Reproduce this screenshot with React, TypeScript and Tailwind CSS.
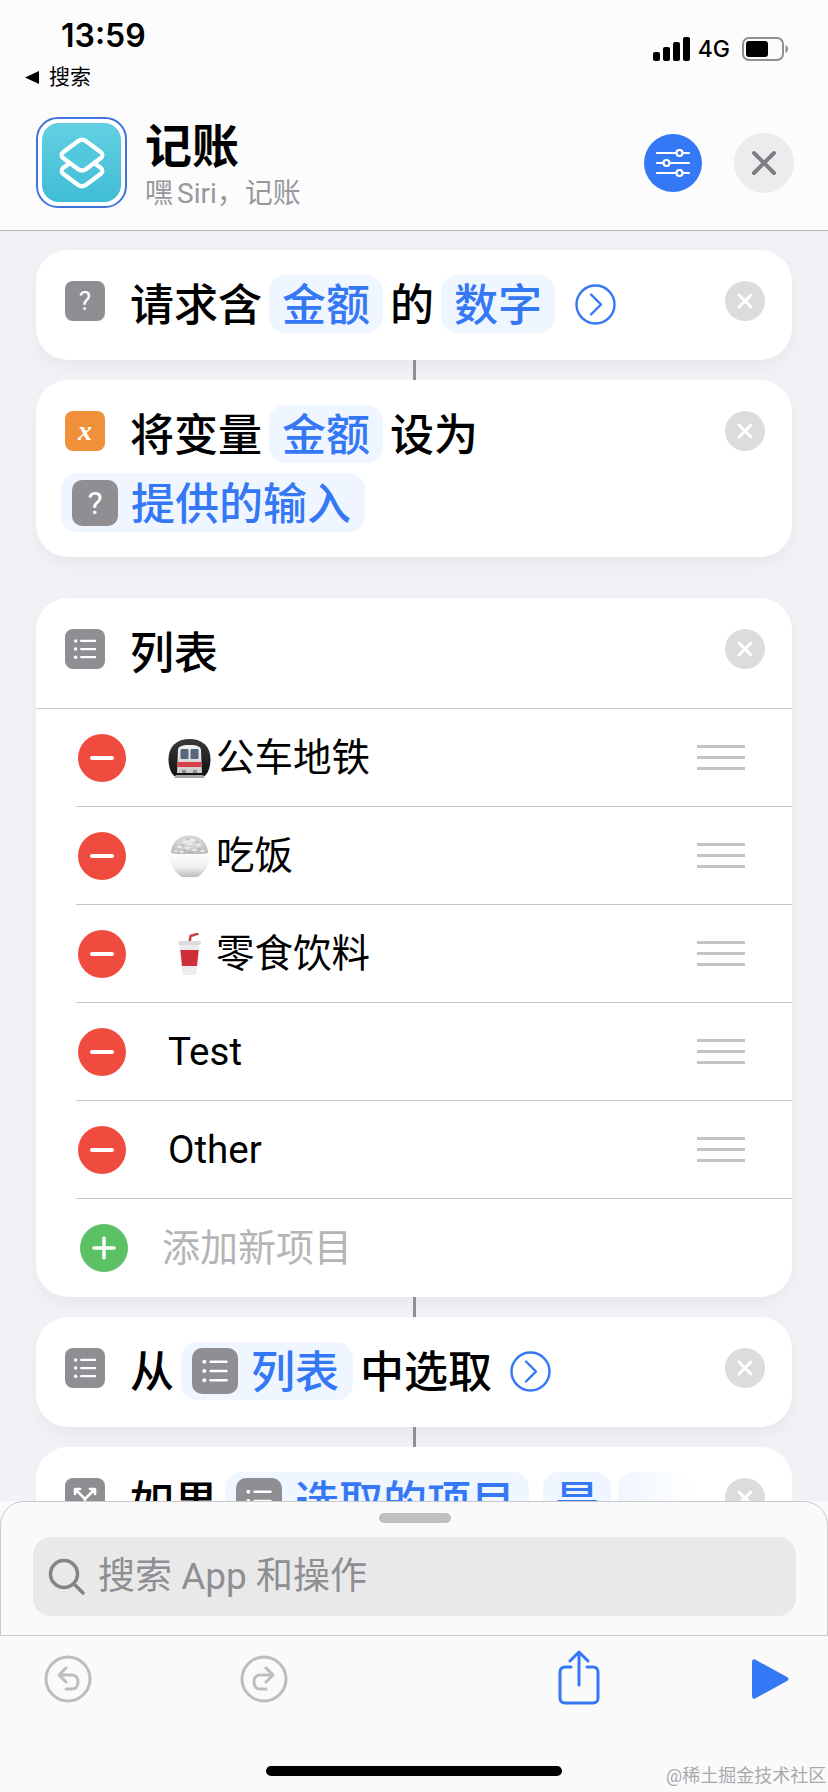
import React from 'react';

const FONT = "font-['Roboto','Noto_Sans_CJK_SC',sans-serif]";

function CloseDot() {
  return (
    <div className="flex h-10 w-10 shrink-0 items-center justify-center rounded-full bg-[#dcdcde]">
      <svg width="18" height="18" viewBox="0 0 18 18" fill="none" stroke="white" strokeWidth="3" strokeLinecap="round">
        <path d="M3 3l12 12M15 3L3 15" />
      </svg>
    </div>
  );
}

function ListGlyph({ size }: { size: number }) {
  return (
    <svg width={size} height={size} viewBox="0 0 24 24" fill="white">
      <circle cx="4.5" cy="5.5" r="1.4" />
      <circle cx="4.5" cy="12" r="1.4" />
      <circle cx="4.5" cy="18.5" r="1.4" />
      <rect x="8" y="4.6" width="13" height="1.8" rx="0.9" />
      <rect x="8" y="11.1" width="13" height="1.8" rx="0.9" />
      <rect x="8" y="17.6" width="13" height="1.8" rx="0.9" />
    </svg>
  );
}

function ActionIcon({ children, color = 'bg-[#8e8e93]' }: { children: React.ReactNode; color?: string }) {
  return (
    <div className={`flex h-10 w-10 shrink-0 items-center justify-center rounded-lg ${color}`}>{children}</div>
  );
}

function QuestionMark({ big }: { big?: boolean }) {
  return (
    <span className={`font-normal text-white ${big ? 'text-[32px]' : 'text-[26px]'} leading-none`}>?</span>
  );
}

function Label({ children }: { children: React.ReactNode }) {
  return <span className="mt-1 shrink-0 leading-none">{children}</span>;
}

function Chip({ children, className = '' }: { children?: React.ReactNode; className?: string }) {
  return (
    <span className={`flex h-[58px] shrink-0 items-center rounded-[16px] bg-[#f0f6ff] text-[#3478f6] ${className}`}>
      {children}
    </span>
  );
}

function InnerIcon({ children }: { children: React.ReactNode }) {
  return (
    <span className="flex h-[46px] w-[46px] items-center justify-center rounded-[10px] bg-[#8e8e93]">{children}</span>
  );
}

function Chevron() {
  return (
    <svg width="41" height="41" viewBox="0 0 41 41" fill="none" stroke="#3478f6" strokeWidth="2.4" className="shrink-0">
      <circle cx="20.5" cy="20.5" r="19" />
      <path d="M16 10.5l10 10-10 10" strokeLinecap="round" strokeLinejoin="round" />
    </svg>
  );
}

function Row({ icon, children }: { icon: React.ReactNode; children: React.ReactNode }) {
  return (
    <div className="flex h-[58px] items-start">
      <div className="mt-[6px]">{icon}</div>
      <div className="ml-[25px] flex h-[58px] min-w-0 flex-1 items-center gap-[7px] overflow-hidden">{children}</div>
      <div className="mt-[6px] ml-2">
        <CloseDot />
      </div>
    </div>
  );
}

function Connector() {
  return (
    <div className="flex h-5 justify-center">
      <div className="w-[3px] bg-[#8e8e93]" />
    </div>
  );
}

function MetroEmoji() {
  return (
    <svg width="43" height="42" viewBox="0 0 43 42">
      <defs>
        <linearGradient id="tunnel" x1="0" y1="0" x2="0" y2="1">
          <stop offset="0" stopColor="#3a3a3c" />
          <stop offset="1" stopColor="#111113" />
        </linearGradient>
        <linearGradient id="train" x1="0" y1="0" x2="0" y2="1">
          <stop offset="0" stopColor="#f4f4f4" />
          <stop offset="1" stopColor="#c9c9cb" />
        </linearGradient>
      </defs>
      <path d="M0.500 22C0.500 9 9 2 21.500 2S42.500 9 42.500 22c0 9-3 15-6 17H6.500c-3-2-6-8-6-17z" fill="url(#tunnel)" />
      <path d="M8 38h27l2 3H6z" fill="#a5a5a8" />
      <path d="M10 13c0-3 3-5 11.500-5S33 10 33 13l1 23H9z" fill="url(#train)" />
      <rect x="12.500" y="12" width="8" height="10" rx="1" fill="#56687a" />
      <rect x="22.500" y="12" width="8" height="10" rx="1" fill="#56687a" />
      <rect x="9.500" y="25" width="24" height="5" fill="#d8414a" />
      <rect x="14" y="33" width="4" height="3" fill="#8b8b8d" />
      <rect x="25" y="33" width="4" height="3" fill="#8b8b8d" />
    </svg>
  );
}

function RiceEmoji() {
  return (
    <svg width="43" height="42" viewBox="0 0 43 42">
      <defs>
        <radialGradient id="rice" cx="0.5" cy="0.35" r="0.7">
          <stop offset="0" stopColor="#e6e6e6" />
          <stop offset="1" stopColor="#b9b9b9" />
        </radialGradient>
        <linearGradient id="bowl" x1="0" y1="0" x2="0" y2="1">
          <stop offset="0" stopColor="#ffffff" />
          <stop offset="0.6" stopColor="#f0f0f0" />
          <stop offset="1" stopColor="#bcbcbc" />
        </linearGradient>
      </defs>
      <path d="M3 19C3 8 10 0.500 21.500 0.500S40 8 40 19z" fill="url(#rice)" />
      <path
        d="M10 12h3M16 7h3M23 5h3M29 10h3M18 13h3M25 15h3M12 17h3M33 16h3M21 9h2M7 16h2"
        stroke="#f7f7f7"
        strokeWidth="1.500"
        strokeLinecap="round"
      />
      <path
        d="M14 10h2M21 17h2M28 7h2M16 16h2M30 14h2M19 4h2"
        stroke="#a6a6a6"
        strokeWidth="1.200"
        strokeLinecap="round"
      />
      <path d="M0.500 17c2 3 40 3 42 0 0 12-6 21-13 25H14C7 38 0.500 29 0.500 17z" fill="url(#bowl)" />
    </svg>
  );
}

function DrinkEmoji() {
  return (
    <svg width="43" height="42" viewBox="0 0 43 42">
      <path d="M21.500 10l1-7 8-2.500" fill="none" stroke="#c9404a" strokeWidth="2.500" />
      <rect x="10" y="8" width="23" height="4" rx="2" fill="#dcdcde" />
      <path d="M11.500 12h20l-3 28c0 1-1 2-2 2H16.500c-1 0-2-1-2-2z" fill="#ececee" />
      <path d="M12.300 17h18.400l-1.700 16H14z" fill="#cf2f38" />
    </svg>
  );
}

function DeleteDot() {
  return (
    <div className="ml-[2px] flex h-12 w-12 shrink-0 items-center justify-center rounded-full bg-[#ef4c3f]">
      <div className="h-1 w-6 rounded-full bg-white" />
    </div>
  );
}

function ListRow({ emoji, label }: { emoji?: React.ReactNode; label: string }) {
  return (
    <div className="ml-10 flex h-[98px] items-center border-b border-[#c6c6c8] pr-[47px]">
      <DeleteDot />
      <div className="ml-[42px] flex flex-1 items-center gap-[5px] text-[38.5px] font-normal text-black">
        {emoji}
        <span>{label}</span>
      </div>
      <div className="flex w-12 flex-col gap-[8px]">
        <div className="h-[3px] bg-[#c4c4c6]" />
        <div className="h-[3px] bg-[#c4c4c6]" />
        <div className="h-[3px] bg-[#c4c4c6]" />
      </div>
    </div>
  );
}

export default function App() {
  return (
    <div className={`relative flex h-[1792px] w-[828px] flex-col overflow-hidden bg-[#f2f2f6] ${FONT}`}>
      {/* Header */}
      <header className="h-[231px] shrink-0 border-b border-[#b8b8bc] bg-[#fcfcfd]">
        <div className="flex h-[117px] items-start justify-between">
          <div className="pt-[17px]">
            <div className="pl-[61px] font-['Inter',sans-serif] text-[32px] leading-[38px] font-semibold text-black">13:59</div>
            <div className="mt-[10px] flex items-center pl-[25px] text-[21px] leading-6 text-black">
              <svg width="15" height="13" viewBox="0 0 15 13" fill="black">
                <path d="M0 6.500L14 0v13z" />
              </svg>
              <span className="ml-[9px]">搜索</span>
            </div>
          </div>
          <div className="flex items-center pt-[37px] pr-10">
            <svg width="37" height="24" viewBox="0 0 37 24" fill="black">
              <rect x="0" y="15" width="7" height="9" rx="2" />
              <rect x="10" y="10" width="7" height="14" rx="2" />
              <rect x="20" y="5" width="7" height="19" rx="2" />
              <rect x="30" y="0" width="7" height="24" rx="2" />
            </svg>
            <span className="ml-2 font-['Inter',sans-serif] text-[23px] leading-6 font-medium text-black">4G</span>
            <svg width="46" height="24" viewBox="0 0 46 24" className="ml-[12px]">
              <rect x="1" y="1" width="40" height="22" rx="6" fill="none" stroke="#8f8f93" strokeWidth="2" />
              <rect x="4" y="4" width="22" height="16" rx="3" fill="black" />
              <path d="M43.500 8c1.500.5 2.500 2 2.500 4s-1 3.500-2.500 4z" fill="#8f8f93" />
            </svg>
          </div>
        </div>
        <div className="flex h-[91px] items-center pr-[34px] pl-9">
          <div className="h-[91px] w-[91px] shrink-0 rounded-[22px] border-2 border-[#3f74dc] bg-white p-1">
            <div className="flex h-full w-full items-center justify-center rounded-[17px] bg-gradient-to-b from-[#62d0e2] to-[#3fbcd5]">
              <svg width="48" height="54" viewBox="-2 -2 48 48" preserveAspectRatio="none" fill="none" stroke="white" strokeWidth="4">
                <path d="M18 16.500Q22 14 26 16.500L41 26.500Q44 29 41 31.500L26 41.500Q22 44 18 41.500L3 31.500Q0 29 3 26.500Z" />
                <path d="M18 2.500Q22 0 26 2.500L41 12.500Q44 15 41 17.500L26 27.500Q22 30 18 27.500L3 17.500Q0 15 3 12.500Z" fill="#52c8dc" />
              </svg>
            </div>
          </div>
          <div className="ml-[18px] flex-1 translate-y-[2px]">
            <div className="text-[47px] leading-[56px] font-bold text-black">记账</div>
            <div className="mt-[2px] text-[28px] leading-[34px] text-[#98989c]">
              嘿<span className="ml-1">Siri</span>，记账
            </div>
          </div>
          <div className="flex h-[58px] w-[58px] items-center justify-center rounded-full bg-[#3478f6]">
            <svg width="34" height="28" viewBox="0 0 34 28" fill="none" stroke="white" strokeWidth="2.2">
              <path d="M1 4h19M27 4h6M1 14h6M14 14h19M1 24h19M27 24h6" strokeLinecap="round" />
              <circle cx="23.500" cy="4" r="3" />
              <circle cx="10.500" cy="14" r="3" />
              <circle cx="23.500" cy="24" r="3" />
            </svg>
          </div>
          <div className="ml-8 flex h-[60px] w-[60px] items-center justify-center rounded-full bg-[#ececee]">
            <svg width="26" height="26" viewBox="0 0 26 26" fill="none" stroke="#7e7e82" strokeWidth="4" strokeLinecap="round">
              <path d="M3 3l20 20M23 3L3 23" />
            </svg>
          </div>
        </div>
      </header>

      {/* Action list */}
      <main className="min-h-0 flex-1 overflow-hidden px-9 pt-[19px] text-[44px] font-medium text-black">
        <section className="rounded-[32px] bg-white pt-[25px] pr-[27px] pb-[27px] pl-[29px] shadow-[0_8px_16px_rgba(0,0,0,0.04)]">
          <Row icon={<ActionIcon><QuestionMark /></ActionIcon>}>
            <Label>请求含</Label>
            <Chip className="px-[13px]"><Label>金额</Label></Chip>
            <Label>的</Label>
            <Chip className="px-[13px]"><Label>数字</Label></Chip>
            <span className="ml-[13px] shrink-0"><Chevron /></span>
          </Row>
        </section>
        <Connector />
        <section className="rounded-[32px] bg-white pt-[25px] pr-[27px] pb-[25px] pl-[29px] shadow-[0_8px_16px_rgba(0,0,0,0.04)]">
          <Row
            icon={
              <ActionIcon color="bg-[#f0903a]">
                <span className="font-['Liberation_Serif',serif] text-[28px] leading-none font-bold text-white italic">x</span>
              </ActionIcon>
            }
          >
            <Label>将变量</Label>
            <Chip className="px-[13px]"><Label>金额</Label></Chip>
            <Label>设为</Label>
          </Row>
          <div className="mt-[10px] -ml-[4px] flex">
            <Chip className="h-[59px] gap-[13px] pr-[14px] pl-[11px]">
              <InnerIcon><QuestionMark big /></InnerIcon>
              <Label>提供的输入</Label>
            </Chip>
          </div>
        </section>

        <section className="mt-[41px] rounded-[32px] bg-white shadow-[0_8px_16px_rgba(0,0,0,0.04)]">
          <div className="h-[111px] border-b border-[#c6c6c8] pt-[25px] pr-[27px] pl-[29px]">
            <Row icon={<ActionIcon><ListGlyph size={30} /></ActionIcon>}>
              <Label>列表</Label>
            </Row>
          </div>
          <ListRow emoji={<MetroEmoji />} label="公车地铁" />
          <ListRow emoji={<RiceEmoji />} label="吃饭" />
          <ListRow emoji={<DrinkEmoji />} label="零食饮料" />
          <ListRow label="Test" />
          <ListRow label="Other" />
          <div className="ml-10 flex h-[98px] items-center">
            <div className="ml-1 flex h-12 w-12 items-center justify-center rounded-full bg-[#5cc065]">
              <svg width="26" height="26" viewBox="0 0 26 26" stroke="white" strokeWidth="3.5" strokeLinecap="round">
                <path d="M13 3v20M3 13h20" />
              </svg>
            </div>
            <span className="ml-[34px] text-[38px] font-normal text-[#b5b5b8]">添加新项目</span>
          </div>
        </section>
        <Connector />
        <section className="rounded-[32px] bg-white pt-[25px] pr-[27px] pb-[27px] pl-[29px] shadow-[0_8px_16px_rgba(0,0,0,0.04)]">
          <Row icon={<ActionIcon><ListGlyph size={30} /></ActionIcon>}>
            <Label>从</Label>
            <Chip className="gap-[13px] pr-[14px] pl-[11px]">
              <InnerIcon><ListGlyph size={34} /></InnerIcon>
              <Label>列表</Label>
            </Chip>
            <Label>中选取</Label>
            <span className="ml-[11px] shrink-0"><Chevron /></span>
          </Row>
        </section>
        <Connector />
        <section className="rounded-[32px] bg-white pt-[25px] pr-[27px] pb-[27px] pl-[29px]">
          <Row
            icon={
              <ActionIcon>
                <svg width="26" height="26" viewBox="0 0 26 26" fill="none" stroke="white" strokeWidth="2.600" strokeLinecap="round" strokeLinejoin="round">
                  <path d="M13 24V14L4 5M13 14L22 5M3 9V4h5M23 9V4h-5" />
                </svg>
              </ActionIcon>
            }
          >
            <Label>如果</Label>
            <Chip className="gap-[13px] pr-[14px] pl-[11px]">
              <InnerIcon><ListGlyph size={34} /></InnerIcon>
              <Label>选取的项目</Label>
            </Chip>
            <Chip className="ml-[7px] px-[12px]"><Label>是</Label></Chip>
            <Chip className="w-[77px] !bg-transparent bg-gradient-to-r from-[#f0f6ff] to-white" />
          </Row>
        </section>
      </main>

      {/* Bottom sheet and toolbar */}
      <div className="h-[291px] shrink-0 bg-[#fafafb]">
        <div className="h-[135px] rounded-t-[24px] border border-[#c9c9cc] bg-[#fafafa] pr-[31px] pl-[32px]">
          <div className="mx-auto mt-[11px] h-[10px] w-[72px] rounded-full bg-[#c0c0c2]" />
          <div className="mt-[14px] flex h-[79px] items-center rounded-[18px] bg-[#e9e9ea] pl-[15px] text-[37px] text-[#8e8e93]">
            <svg width="37" height="37" viewBox="0 0 37 37" fill="none" stroke="#848488" strokeWidth="3.500" strokeLinecap="round" className="shrink-0">
              <circle cx="16" cy="16" r="13.500" />
              <path d="M26 26l9 9" />
            </svg>
            <span className="ml-[13px]">搜索 App 和操作</span>
          </div>
        </div>
        <div className="flex h-[70px] items-start pt-[19px] pl-11">
          <svg width="48" height="48" viewBox="0 0 48 48" fill="none" stroke="#bdbdbf" strokeWidth="3" strokeLinecap="round" strokeLinejoin="round">
            <circle cx="24" cy="24" r="22" />
            <path d="M22 13l-7 7 7 7M15 20h13c4 0 6 3 6 7s-2 7-6 7h-6" />
          </svg>
          <svg width="48" height="48" viewBox="0 0 48 48" fill="none" stroke="#bdbdbf" strokeWidth="3" strokeLinecap="round" strokeLinejoin="round" className="ml-[148px]">
            <circle cx="24" cy="24" r="22" />
            <path d="M26 13l7 7-7 7M33 20H20c-4 0-6 3-6 7s2 7 6 7h6" />
          </svg>
          <svg width="42" height="55" viewBox="0 0 42 55" fill="none" stroke="#3478f6" strokeWidth="3" strokeLinecap="round" strokeLinejoin="round" className="mt-[-5px] ml-[270px]">
            <path d="M13 17H7c-3 0-5 2-5 5v26c0 3 2 5 5 5h28c3 0 5-2 5-5V22c0-3-2-5-5-5h-6" />
            <path d="M21 35V2M12 11l9-9 9 9" />
          </svg>
          <svg width="37" height="40" viewBox="0 0 37 40" fill="#3478f6" className="mt-1 ml-[152px]">
            <path d="M0 3c0-2.500 2-3.500 4-2l31 17c2 1 2 3 0 4L4 39c-2 1.500-4 .5-4-2z" />
          </svg>
        </div>
        <div className="mx-auto mt-[60px] h-[10px] w-[296px] rounded-full bg-black" />
      </div>
      <span className="absolute top-[1765px] left-[666px] text-[18px] leading-[22px] text-[#a9a9ad]">@稀土掘金技术社区</span>
    </div>
  );
}
